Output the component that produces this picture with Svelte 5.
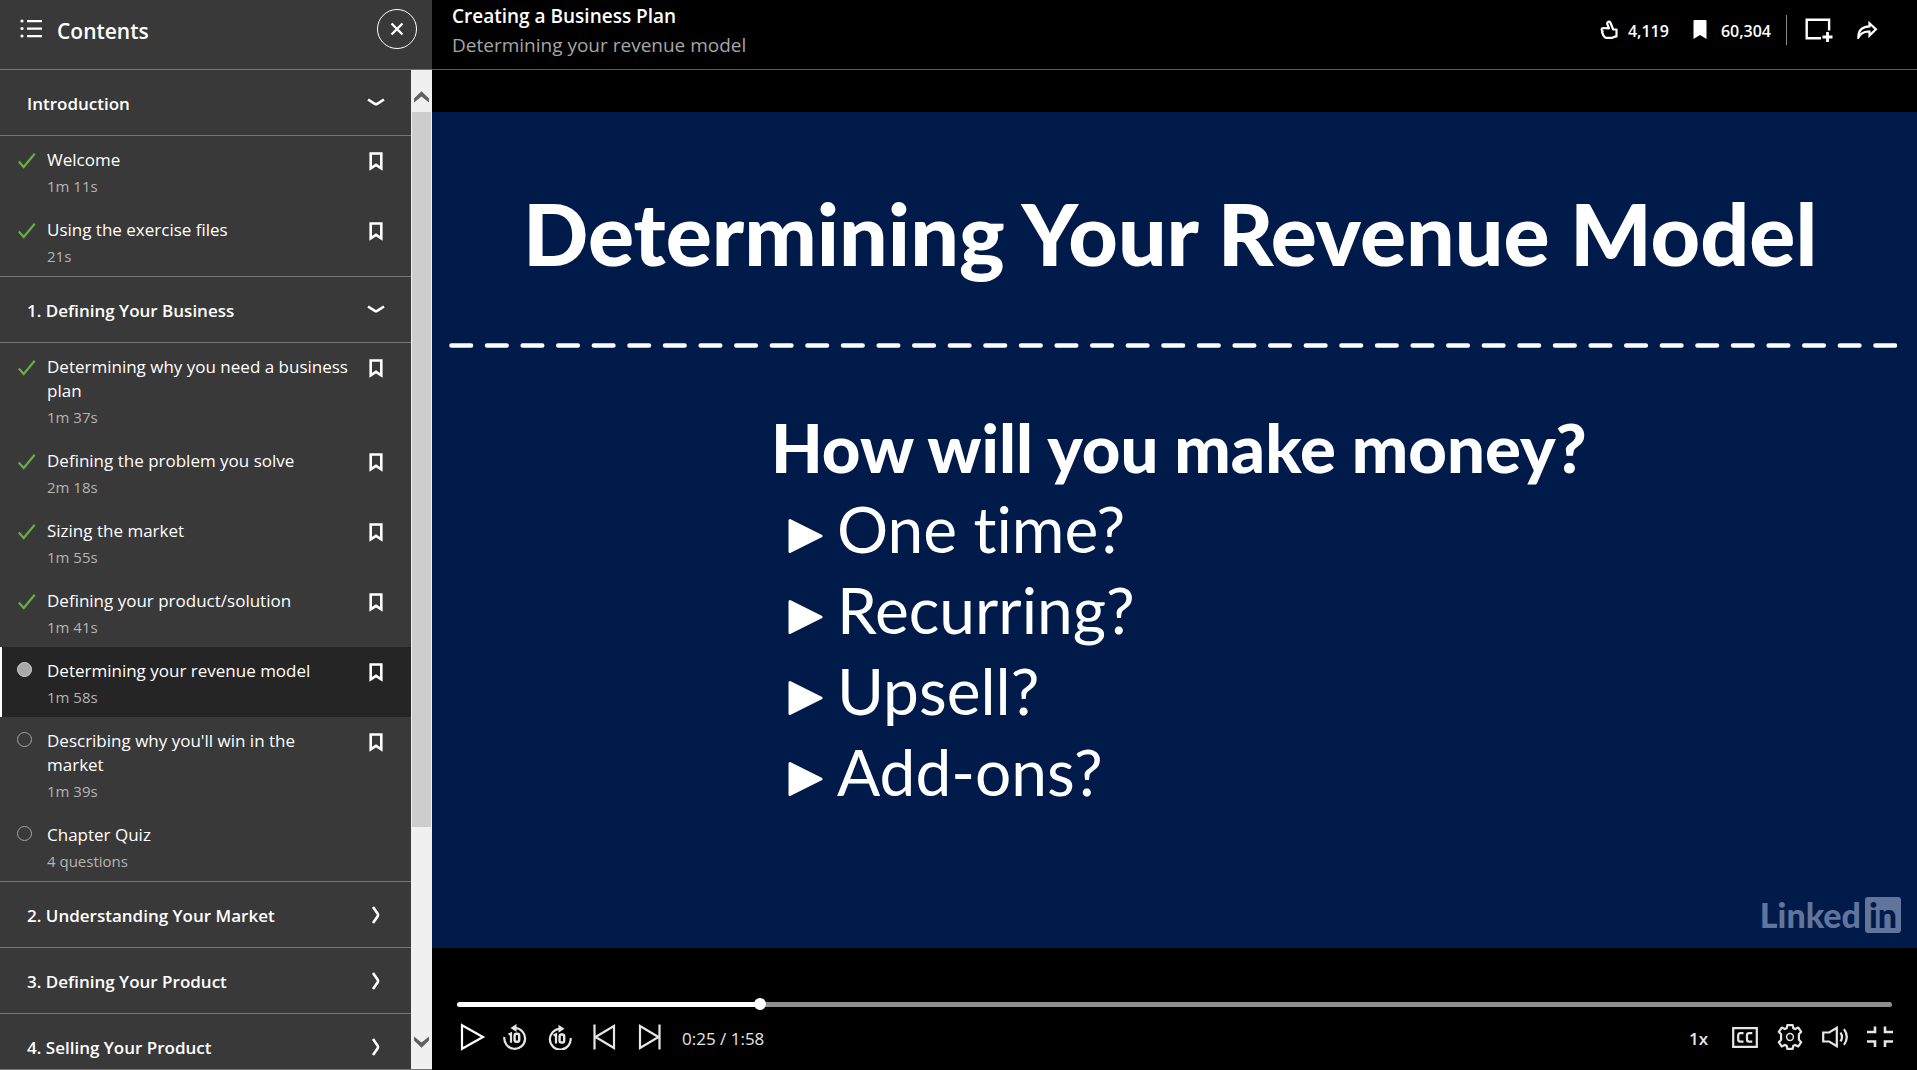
<script>
  const chapters = [
    {
      title: 'Introduction',
      open: true,
      items: [
        { title: 'Welcome', meta: '1m 11s', state: 'done', mark: true },
        { title: 'Using the exercise files', meta: '21s', state: 'done', mark: true }
      ]
    },
    {
      title: '1. Defining Your Business',
      open: true,
      items: [
        { title: 'Determining why you need a business plan', meta: '1m 37s', state: 'done', mark: true },
        { title: 'Defining the problem you solve', meta: '2m 18s', state: 'done', mark: true },
        { title: 'Sizing the market', meta: '1m 55s', state: 'done', mark: true },
        { title: 'Defining your product/solution', meta: '1m 41s', state: 'done', mark: true },
        { title: 'Determining your revenue model', meta: '1m 58s', state: 'current', mark: true },
        { title: "Describing why you'll win in the market", meta: '1m 39s', state: 'todo', mark: true },
        { title: 'Chapter Quiz', meta: '4 questions', state: 'todo', mark: false }
      ]
    },
    { title: '2. Understanding Your Market', open: false, items: [] },
    { title: '3. Defining Your Product', open: false, items: [] },
    { title: '4. Selling Your Product', open: false, items: [] }
  ];
  const points = ['One time?', 'Recurring?', 'Upsell?', 'Add-ons?'];

  const duration = 118;
  let position = $state(24.6);
  let played = $derived((position / duration) * 100);
</script>

<div class="app">
  <aside class="sidebar">
    <header class="side-head">
      <svg class="list-icon" width="23" height="20" viewBox="0 0 23 20" fill="#fff" aria-hidden="true">
        <circle cx="2" cy="2" r="1.6" /><circle cx="2" cy="9.500" r="1.6" /><circle cx="2" cy="17" r="1.6" />
        <path d="M7 1h15v2.200H7zM7 8.500h15v2.200H7zM7 16h15v2.200H7z" />
      </svg>
      <h2>Contents</h2>
      <button class="close" aria-label="Close contents">
        <svg width="14" height="14" viewBox="0 0 14 14" stroke="#fff" stroke-width="2.400" aria-hidden="true">
          <path d="M1.500 1.500l11 11M12.500 1.500l-11 11" />
        </svg>
      </button>
    </header>

    <div class="side-body">
      <nav class="toc" aria-label="Contents">
        {#each chapters as chapter}
          <section class="chapter">
            <button class="chapter-head" aria-expanded={chapter.open}>
              <span>{chapter.title}</span>
              <svg width="18" height="18" viewBox="0 0 18 18" fill="none" stroke="#fff" stroke-width="2.600" aria-hidden="true">
                {#if chapter.open}
                  <path d="M1 5.500l6.800 4.300q1.200.7 2.400 0L17 5.500" />
                {:else}
                  <path d="M6 1l4.700 6.800q.8 1.200 0 2.400L6 17" />
                {/if}
              </svg>
            </button>
            {#if chapter.open}
              <ul>
                {#each chapter.items as item}
                  <li class="item" class:current={item.state === 'current'}>
                    <span class="status">
                      {#if item.state === 'done'}
                        <svg width="18" height="16" viewBox="0 0 18 16" fill="none" stroke="#68ad45" stroke-width="2.200" aria-hidden="true">
                          <path d="M.8 8.600l4.900 5.400L16.700.8" />
                        </svg>
                      {:else}
                        <span class="ring"></span>
                      {/if}
                    </span>
                    <a class="lesson" href="#lesson">
                      <span class="name">{item.title}</span>
                      <span class="meta">{item.meta}</span>
                    </a>
                    {#if item.mark}
                      <button class="mark" aria-label="Save {item.title}">
                        <svg width="14" height="19" viewBox="0 0 14 19" fill="none" stroke="#fff" stroke-width="2.600" aria-hidden="true">
                          <path d="M1.700 1.500h10.600v14.800L7 12.800l-5.300 3.500z" />
                        </svg>
                      </button>
                    {/if}
                  </li>
                {/each}
              </ul>
            {/if}
          </section>
        {/each}
      </nav>
      <div class="scrollbar" aria-hidden="true">
        <svg class="cap up" width="15" height="12" viewBox="0 0 15 12" fill="#606060"><path d="M0 7.400L7.500.2 15 7.400v4.100L7.500 5.400 0 11.500z" /></svg>
        <div class="thumb"></div>
        <div class="rest"></div>
        <svg class="cap" width="15" height="12" viewBox="0 0 15 12" fill="#606060"><path d="M0 4.600l7.500 7.200L15 4.600V.5L7.500 6.600 0 .5z" /></svg>
      </div>
    </div>
  </aside>

  <main>
    <header class="top">
      <div class="titles">
        <h1>Creating a Business Plan</h1>
        <p>Determining your revenue model</p>
      </div>
      <div class="actions">
        <button class="stat">
          <svg width="18" height="20" viewBox="0 0 18 20" fill="none" stroke="#fff" stroke-width="2.200" stroke-linejoin="round" aria-hidden="true">
            <path d="M16.500 9.500h-3.300L10.600 3Q9.900 1.200 8.300 1.800 6.900 2.400 7.300 4L9 8.300 3.300 8Q1.400 8.200 1.700 10q.2.900.9 1.200-1 1.500.3 2.500-.3 1.500.9 2.100.4 1.800 2.400 2h5.500q1.400-.1 2.500-.9l2.300-.5z" />
          </svg>
          <span>4,119</span>
        </button>
        <button class="stat saved">
          <svg width="14" height="20" viewBox="0 0 14 20" fill="#fff" aria-hidden="true"><path d="M1.500 0h11q1 0 1 1v18L7 15 .5 19V1q0-1 1-1z" /></svg>
          <span>60,304</span>
        </button>
        <span class="divider"></span>
        <button aria-label="Add to collection">
          <svg width="28" height="25" viewBox="0 0 28 25" fill="none" stroke="#fff" stroke-width="2.400" aria-hidden="true">
            <path d="M16 20.300H1.700V1.700h22.400V12.500" />
            <path d="M17.500 19H27.500M22.500 14v10" stroke-width="2.800" />
          </svg>
        </button>
        <button aria-label="Share">
          <svg width="21" height="18" viewBox="0 0 21 18" fill="none" stroke="#fff" stroke-width="2.200" aria-hidden="true">
            <path d="M12.500 2.200l6.400 6-6.400 6.300v-3.900Q4.800 9.900 1.400 16.500 1 6 12.500 5.400z" />
          </svg>
        </button>
      </div>
    </header>

    <div class="stage">
      <article class="slide">
        <h2>Determining Your Revenue Model</h2>
        <svg class="dashes" viewBox="0 0 1448 5" preserveAspectRatio="none" aria-hidden="true">
          <path d="M2.500 2.500H1448" stroke="#fff" stroke-width="4.600" stroke-linecap="round" stroke-dasharray="19.500 16.100" />
        </svg>
        <div class="copy">
          <h3>How will you make money?</h3>
          <ul>
            {#each points as point}
              <li>
                <svg width="35" height="36" viewBox="0 0 35 36" fill="#fff" stroke="#fff" stroke-width="3" stroke-linejoin="round" aria-hidden="true"><path d="M2 2.500L33 18 2 33.500z" /></svg>
                <span>{point}</span>
              </li>
            {/each}
          </ul>
        </div>
        <div class="brand"><span>Linked</span><span class="in">in</span></div>
      </article>
    </div>

    <footer class="player">
      <input
        class="seek"
        type="range"
        min="0"
        max={duration}
        step="any"
        bind:value={position}
        aria-label="Seek"
        style="--played: {played}%"
      />
      <div class="controls">
        <button class="play" aria-label="Play">
          <svg width="26" height="28" viewBox="0 0 26 28" fill="none" stroke="#fff" stroke-width="2.200" aria-hidden="true"><path d="M2 2.200L23 14 2 25.800z" /></svg>
        </button>
        <button class="tool" aria-label="Back 10 seconds">
          <svg width="24" height="26" viewBox="0 0 24 26" fill="none" stroke="#e6e6e6" stroke-width="2.200" aria-hidden="true">
            <path d="M1.400 13A10.400 10.400 0 1 0 12 4" />
            <path d="M13.500 0v8L7.500 4z" fill="#e6e6e6" stroke="none" />
            <path d="M5.500 10.600l2.500-1.200v9.400" stroke-width="2.200" />
            <rect x="11.600" y="9.700" width="4.600" height="8" rx="1.800" stroke-width="2.400" />
          </svg>
        </button>
        <button class="tool" aria-label="Forward 10 seconds">
          <svg width="24" height="26" viewBox="0 0 24 26" fill="none" stroke="#e6e6e6" stroke-width="2.200" aria-hidden="true">
            <path d="M22.600 14A10.400 10.400 0 1 1 12 4.800" />
            <path d="M10.500.8v8l6-4z" fill="#e6e6e6" stroke="none" />
            <path d="M5.500 11.400l2.500-1.200v9.400" stroke-width="2.200" />
            <rect x="11.600" y="10.500" width="4.600" height="8" rx="1.800" stroke-width="2.400" />
          </svg>
        </button>
        <button class="tool" aria-label="Previous video">
          <svg width="23" height="26" viewBox="0 0 23 26" fill="none" stroke="#e6e6e6" stroke-width="2.200" aria-hidden="true"><path d="M1.500.5v25M21 2v22L2.500 13z" /></svg>
        </button>
        <button class="tool" aria-label="Next video">
          <svg width="23" height="26" viewBox="0 0 23 26" fill="none" stroke="#e6e6e6" stroke-width="2.200" aria-hidden="true"><path d="M21.500.5v25M2 2v22L20.500 13z" /></svg>
        </button>
        <span class="time">0:25 / 1:58</span>
        <span class="grow"></span>
        <button class="rate">1x</button>
        <button class="tool" aria-label="Captions">
          <svg width="26" height="21" viewBox="0 0 26 21" fill="none" stroke="#e6e6e6" stroke-width="2.200" aria-hidden="true">
            <path d="M1.200 1.200h23.600v18.600H1.200z" />
            <path d="M11.500 6.200H8.300Q6.200 6.200 6.200 8.300v4.200q0 2.100 2.100 2.100h3.200M20.300 6.200h-3.200q-2.100 0-2.100 2.100v4.200q0 2.100 2.100 2.100h3.200" stroke-width="2.200" />
          </svg>
        </button>
        <button class="tool" aria-label="Settings">
          <svg width="26" height="26" viewBox="0 0 26 26" fill="none" stroke="#e6e6e6" stroke-width="2.200" stroke-linejoin="round" aria-hidden="true">
            <path d="M10.300 1.200h5.400l.6 3 1.900.9 3.100-1.500 2.900 4.200-2.300 2.500v5.400l2.300 2.500-2.900 4.200-3.100-1.500-1.900.9-.6 3h-5.400l-.6-3-1.900-.9-3.100 1.500-2.900-4.200 2.300-2.500v-5.400L1.800 7.800l2.900-4.200 3.100 1.500 1.900-.9z" />
            <circle cx="13" cy="13" r="3.400" stroke-width="1.500" />
          </svg>
        </button>
        <button class="tool" aria-label="Mute">
          <svg width="28" height="22" viewBox="0 0 28 22" fill="none" stroke="#e6e6e6" stroke-width="2.200" aria-hidden="true">
            <path d="M2.200 6.500h6L15.800 1.800v18.400L8.200 15.500h-6z" />
            <path d="M19.500 6.600q3 4.400 0 8.800M23 3.200q5.600 7.800 0 15.600" />
          </svg>
        </button>
        <button class="tool" aria-label="Exit full screen">
          <svg width="26" height="22" viewBox="0 0 26 22" fill="none" stroke="#e6e6e6" stroke-width="2.600" aria-hidden="true">
            <path d="M0 6h8V.5M18 .5V6h8M0 15.500h8V21M18 21v-5.500h8" />
          </svg>
        </button>
      </div>
    </footer>
  </main>
</div>

<style>
  :global(body) {
    margin: 0;
    background: #000;
  }
  .app {
    display: flex;
    height: 100vh;
    overflow: hidden;
    color: #fff;
    font-family: 'Segoe UI', 'Open Sans', 'Noto Sans', sans-serif;
    font-size: 17px;
  }
  h1, h2, h3, p, ul {
    margin: 0;
    padding: 0;
    font-weight: inherit;
  }
  ul {
    list-style: none;
  }
  button {
    display: flex;
    align-items: center;
    padding: 0;
    border: 0;
    background: none;
    color: inherit;
    font: inherit;
    cursor: pointer;
  }
  svg {
    display: block;
    flex: none;
  }

  .sidebar {
    display: flex;
    flex: none;
    flex-direction: column;
    box-sizing: border-box;
    width: 432px;
    border-bottom: 1px solid #757575;
    background: #393939;
  }
  .side-head {
    display: flex;
    flex: none;
    align-items: center;
    box-sizing: border-box;
    height: 70px;
    padding: 0 15px 11px 20px;
    border-bottom: 1px solid #757575;
  }
  .side-head h2 {
    flex: 1;
    padding-top: 3px;
    margin-left: 14px;
    font-size: 21px;
    font-weight: 600;
  }
  .close {
    justify-content: center;
    box-sizing: border-box;
    width: 40px;
    height: 40px;
    border: 1px solid #fff;
    border-radius: 50%;
  }
  .side-body {
    display: flex;
    flex: 1;
    min-height: 0;
  }
  .toc {
    flex: 1;
    overflow: hidden;
  }
  .chapter + .chapter {
    border-top: 1px solid #757575;
  }
  .chapter-head {
    justify-content: space-between;
    width: 100%;
    height: 65px;
    padding: 0 26px 0 27px;
    font-weight: 600;
    text-align: left;
  }
  .chapter-head span {
    padding-top: 2px;
  }
  .chapter ul {
    border-top: 1px solid #757575;
  }
  .item {
    display: flex;
    align-items: flex-start;
    padding: 12px 28px 10px 17px;
  }
  .item.current {
    padding-left: 15px;
    border-left: 2px solid #fff;
    background: #252525;
  }
  .status {
    flex: none;
    width: 30px;
    padding-top: 5px;
  }
  .status svg {
    margin-left: 1px;
  }
  .ring {
    display: block;
    box-sizing: border-box;
    width: 15px;
    height: 15px;
    margin-top: -2px;
    border: 1px solid #a5a5a5;
    border-radius: 50%;
  }
  .current .ring {
    border-color: #cfcfcf;
    background: #a8a8a8;
  }
  .lesson {
    display: flex;
    flex: 1;
    flex-direction: column;
    gap: 4px;
    padding-right: 18px;
    color: #fff;
    text-decoration: none;
  }
  .name {
    line-height: 24px;
  }
  .meta {
    color: #b4b4b4;
    font-size: 15px;
    line-height: 20px;
  }
  .mark {
    padding-top: 4px;
  }

  .scrollbar {
    display: flex;
    flex: none;
    flex-direction: column;
    align-items: center;
    box-sizing: border-box;
    width: 21px;
    padding-bottom: 21px;
    background: #f0f0f0;
  }
  .cap.up {
    padding: 21px 0 9px;
  }
  .thumb {
    flex: 715;
    width: 19px;
    background: #cdcdcd;
  }
  .rest {
    flex: 209;
  }

  main {
    display: flex;
    flex: 1;
    flex-direction: column;
    min-width: 0;
    background: #000;
  }
  .top {
    display: flex;
    flex: none;
    justify-content: space-between;
    box-sizing: border-box;
    height: 70px;
    padding: 2px 39px 0 20px;
    border-bottom: 1px solid #5a5a5a;
  }
  .titles {
    font-size: 19px;
    line-height: 29px;
  }
  .titles h1 {
    font-size: 19px;
    font-weight: 600;
  }
  .titles p {
    color: #a6a6a6;
  }
  .actions {
    display: flex;
    align-items: center;
    height: 56px;
    gap: 24px;
    font-size: 16px;
    font-weight: 600;
  }
  .stat {
    gap: 10px;
  }
  .stat span {
    padding-top: 2px;
  }
  .saved {
    gap: 14px;
    margin-right: -9px;
  }
  .divider {
    width: 1px;
    height: 30px;
    margin-right: -6px;
    background: #8a8a8a;
  }

  .stage {
    display: flex;
    flex: 1;
    align-items: center;
    min-height: 0;
  }
  .slide {
    display: flex;
    flex-direction: column;
    box-sizing: border-box;
    width: 100%;
    aspect-ratio: 16 / 9;
    padding: 61px 16px 15px 17px;
    background: #001b49;
    font-family: Lato, 'Open Sans', sans-serif;
    font-variant-ligatures: none;
  }
  .slide h2 {
    padding-left: 74px;
    font-size: 86px;
    font-weight: 900;
    line-height: 120px;
    white-space: nowrap;
  }
  .dashes {
    width: auto;
    height: 5px;
    margin: 50px 4px 0 0;
  }
  .copy {
    flex: 1;
    padding: 59px 0 0 322px;
    font-size: 64px;
    line-height: 81px;
  }
  .slide h3 {
    font-size: 67px;
    font-weight: 900;
    white-space: nowrap;
  }
  .copy li {
    display: flex;
    align-items: center;
    gap: 14px;
    padding-left: 17px;
  }
  .copy li svg {
    margin-top: 15px;
  }
  .brand {
    display: flex;
    align-items: center;
    justify-content: flex-end;
    gap: 4px;
    color: #60749c;
    font-size: 34px;
    font-weight: 900;
    line-height: 36px;
  }
  .in {
    width: 36px;
    border-radius: 3px;
    background: #60749c;
    color: #001b49;
    text-align: center;
  }

  .player {
    flex: none;
    box-sizing: border-box;
    height: 80px;
    padding: 8px 25px 0;
  }
  .seek {
    display: block;
    width: 100%;
    height: 12px;
    margin: 0;
    appearance: none;
    background: none;
  }
  .seek::-webkit-slider-runnable-track {
    height: 5px;
    border-radius: 3px;
    background: linear-gradient(to right, #fff var(--played), #8f8f8f var(--played));
  }
  .seek::-webkit-slider-thumb {
    width: 12px;
    height: 12px;
    margin-top: -4px;
    appearance: none;
    border-radius: 50%;
    background: #fff;
  }
  .controls {
    display: flex;
    align-items: center;
    height: 36px;
    margin: 9px -10px 0 0;
    padding-left: 3px;
  }
  .play {
    width: 32px;
  }
  .tool {
    justify-content: center;
    width: 45px;
  }
  .time {
    padding-top: 2px;
    margin-left: 10px;
    color: #e6e6e6;
  }
  .grow {
    flex: 1;
  }
  .rate {
    padding-top: 2px;
    margin-right: 14px;
    color: #e6e6e6;
    font-weight: 600;
  }
</style>
